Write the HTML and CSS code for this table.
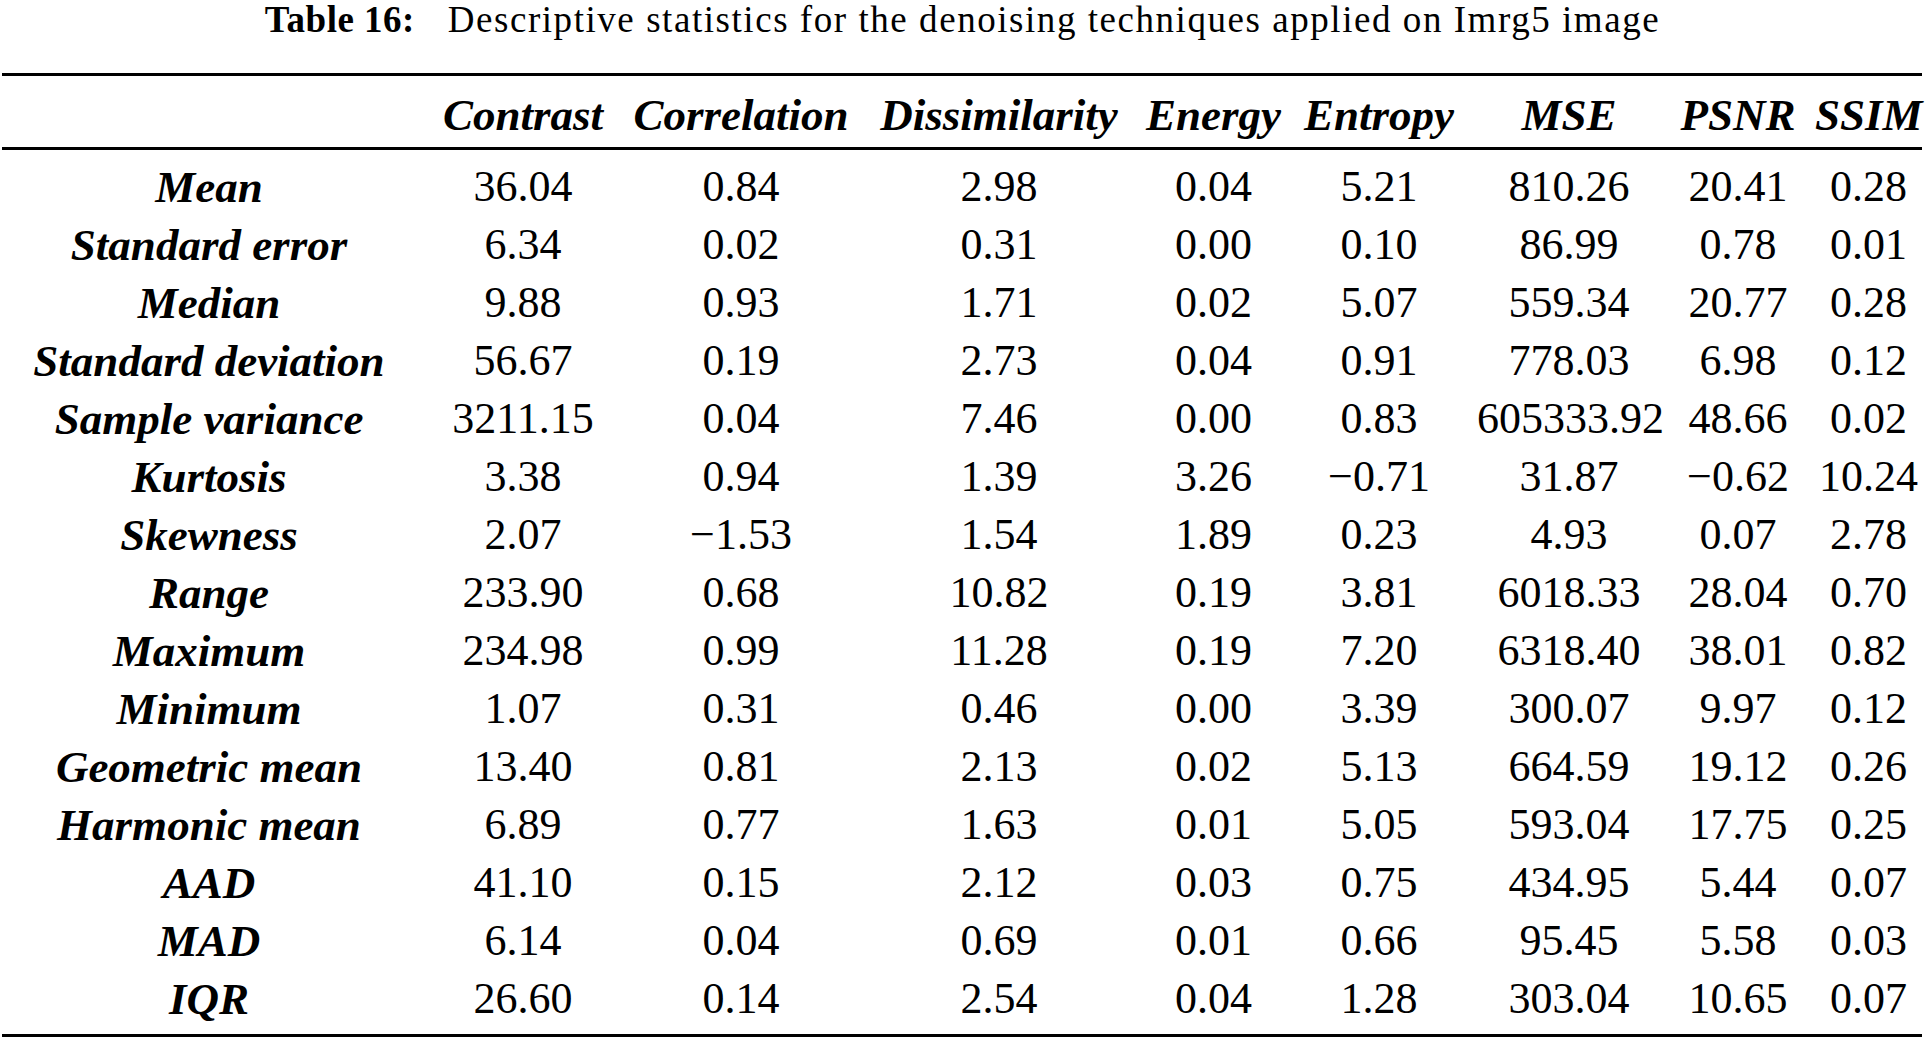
FILE: index.html
```html
<!DOCTYPE html>
<html lang="en">
<head>
<meta charset="utf-8">
<title>Table 16</title>
<link rel="stylesheet" href="styles.css">
</head>
<body>
<p class="caption"><b class="cap-label">Table 16:</b> Descriptive statistics for the denoising techniques applied on Imrg5 image</p>
<table class="stats">
<colgroup>
<col class="c-label"><col class="c-contrast"><col class="c-corr"><col class="c-diss"><col class="c-energy"><col class="c-entropy"><col class="c-mse"><col class="c-psnr"><col class="c-ssim">
</colgroup>
<thead>
<tr><th></th><th>Contrast</th><th>Correlation</th><th>Dissimilarity</th><th>Energy</th><th>Entropy</th><th>MSE</th><th>PSNR</th><th>SSIM</th></tr>
</thead>
<tbody>
<tr><th>Mean</th><td>36.04</td><td>0.84</td><td>2.98</td><td>0.04</td><td>5.21</td><td>810.26</td><td>20.41</td><td>0.28</td></tr>
<tr><th>Standard error</th><td>6.34</td><td>0.02</td><td>0.31</td><td>0.00</td><td>0.10</td><td>86.99</td><td>0.78</td><td>0.01</td></tr>
<tr><th>Median</th><td>9.88</td><td>0.93</td><td>1.71</td><td>0.02</td><td>5.07</td><td>559.34</td><td>20.77</td><td>0.28</td></tr>
<tr><th>Standard deviation</th><td>56.67</td><td>0.19</td><td>2.73</td><td>0.04</td><td>0.91</td><td>778.03</td><td>6.98</td><td>0.12</td></tr>
<tr><th>Sample variance</th><td>3211.15</td><td>0.04</td><td>7.46</td><td>0.00</td><td>0.83</td><td>605333.92</td><td>48.66</td><td>0.02</td></tr>
<tr><th>Kurtosis</th><td>3.38</td><td>0.94</td><td>1.39</td><td>3.26</td><td>−0.71</td><td>31.87</td><td>−0.62</td><td>10.24</td></tr>
<tr><th>Skewness</th><td>2.07</td><td>−1.53</td><td>1.54</td><td>1.89</td><td>0.23</td><td>4.93</td><td>0.07</td><td>2.78</td></tr>
<tr><th>Range</th><td>233.90</td><td>0.68</td><td>10.82</td><td>0.19</td><td>3.81</td><td>6018.33</td><td>28.04</td><td>0.70</td></tr>
<tr><th>Maximum</th><td>234.98</td><td>0.99</td><td>11.28</td><td>0.19</td><td>7.20</td><td>6318.40</td><td>38.01</td><td>0.82</td></tr>
<tr><th>Minimum</th><td>1.07</td><td>0.31</td><td>0.46</td><td>0.00</td><td>3.39</td><td>300.07</td><td>9.97</td><td>0.12</td></tr>
<tr><th>Geometric mean</th><td>13.40</td><td>0.81</td><td>2.13</td><td>0.02</td><td>5.13</td><td>664.59</td><td>19.12</td><td>0.26</td></tr>
<tr><th>Harmonic mean</th><td>6.89</td><td>0.77</td><td>1.63</td><td>0.01</td><td>5.05</td><td>593.04</td><td>17.75</td><td>0.25</td></tr>
<tr><th>AAD</th><td>41.10</td><td>0.15</td><td>2.12</td><td>0.03</td><td>0.75</td><td>434.95</td><td>5.44</td><td>0.07</td></tr>
<tr><th>MAD</th><td>6.14</td><td>0.04</td><td>0.69</td><td>0.01</td><td>0.66</td><td>95.45</td><td>5.58</td><td>0.03</td></tr>
<tr><th>IQR</th><td>26.60</td><td>0.14</td><td>2.54</td><td>0.04</td><td>1.28</td><td>303.04</td><td>10.65</td><td>0.07</td></tr>
</tbody>
</table>
</body>
</html>
```
FILE: styles.css
```css
html, body {
  margin: 0;
  padding: 0;
  background: #ffffff;
}
body {
  font-family: "Liberation Serif", "Times New Roman", serif;
  color: #000000;
  width: 1925px;
}
.caption {
  margin: 0 0 33px 0;
  font-size: 37px;
  line-height: 40px;
  letter-spacing: 1.55px;
  text-align: center;
  white-space: nowrap;
}
.cap-label {
  font-weight: bold;
  letter-spacing: 0.5px;
  margin-right: 22px;
}
.stats {
  margin-left: 2px;
  width: 1920px;
  table-layout: fixed;
  border-collapse: separate;
  border-spacing: 0;
}
.c-label { width: 414px; }
.c-contrast { width: 214px; }
.c-corr { width: 222px; }
.c-diss { width: 294px; }
.c-energy { width: 135px; }
.c-entropy { width: 196px; }
.c-mse { width: 184px; }
.c-psnr { width: 154px; }
.c-ssim { width: 107px; }
.stats th,
.stats td {
  padding: 0;
  text-align: center;
  white-space: nowrap;
  vertical-align: top;
}
.stats thead th {
  font-size: 45px;
  font-weight: bold;
  font-style: italic;
  line-height: 44px;
  height: 44px;
  padding-top: 17px;
  padding-bottom: 10px;
  border-top: 3px solid #000;
  border-bottom: 3px solid #000;
}
.stats tbody th {
  font-size: 45px;
  font-weight: bold;
  font-style: italic;
  line-height: 58px;
  height: 58px;
}
.stats tbody td {
  font-size: 44px;
  line-height: 58px;
  height: 58px;
}
.stats tbody tr:first-child th,
.stats tbody tr:first-child td {
  padding-top: 8px;
}
.stats tbody tr:last-child th,
.stats tbody tr:last-child td {
  padding-bottom: 6px;
  border-bottom: 3px solid #000;
}
```
